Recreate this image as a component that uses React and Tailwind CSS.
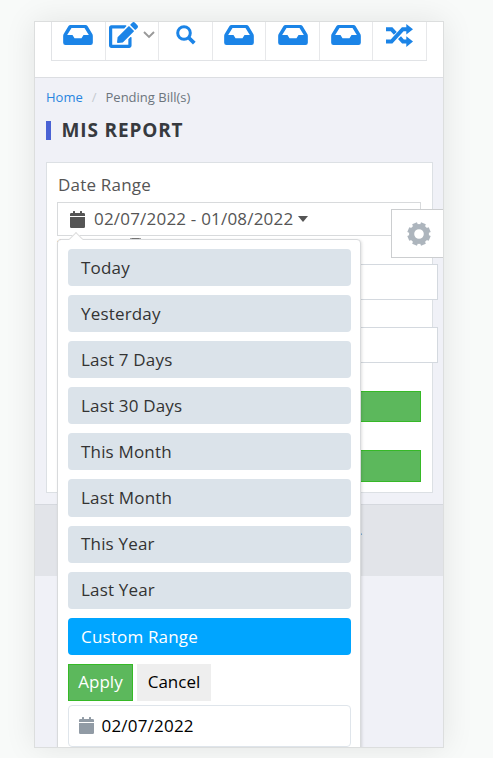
import React from "react";
import { FaEdit } from "react-icons/fa";

const ranges = [
  "Today",
  "Yesterday",
  "Last 7 Days",
  "Last 30 Days",
  "This Month",
  "Last Month",
  "This Year",
  "Last Year",
  "Custom Range",
];

function Calendar({ className }) {
  return (
    <svg className={className} viewBox="0 0 15 17" fill="currentColor">
      <path d="M1.3 2H3V.5Q3 0 3.500 0h1Q5 0 5 .5V2h5V.5q0-.5.5-.5h1q.5 0 .5.5V2h1.700Q15 2 15 3.300V5H0V3.300Q0 2 1.300 2ZM0 6h15v9.700Q15 17 13.700 17H1.300Q0 17 0 15.700Z" />
    </svg>
  );
}

function Inbox() {
  return (
    <svg className="h-[20px] w-[30px]" viewBox="0 0 89 60" fill="currentColor" fillRule="evenodd">
      <path d="M22 0H67Q71 0 73 3L87 26Q89 29 89 33V53Q89 60 82 60H7Q0 60 0 53V33Q0 29 2 26L16 3Q18 0 22 0ZM25 9L12 30H28L34 40H55L61 30H77L64 9Z" />
    </svg>
  );
}

function Search() {
  return (
    <svg className="ml-[1px] h-[20px] w-[20px]" viewBox="0 0 20 20" fill="none" stroke="currentColor">
      <circle cx="8" cy="8" r="6.300" strokeWidth="3" />
      <path d="M12.500 12.500L18.300 18.200" strokeWidth="3.800" />
    </svg>
  );
}

function Shuffle() {
  return (
    <svg className="h-[23px] w-[27px]" viewBox="0 0 27 23" fill="none" stroke="currentColor" strokeWidth="4">
      <path d="M0 17.500H5.500L16.800 5.200H21M0 5.200H5.500L9.300 9.300M13.500 13.600L17 17.500H21" />
      <path d="M20.300 0L27 5.200L20.300 10.500ZM20.300 12.300L27 17.500L20.300 23Z" fill="currentColor" stroke="none" />
    </svg>
  );
}

function Gear() {
  return (
    <svg className="h-[24px] w-[24px] text-[#adb5bd]" viewBox="-12 -12 24 24" fill="none" stroke="currentColor">
      <circle r="7.400" strokeWidth="5.200" />
      <path d="M0-8.500V-11.600M0 8.500V11.600M-8.500 0H-11.600M8.500 0H11.600" strokeWidth="5.200" transform="rotate(22.500)" />
      <path d="M0-8.500V-11.600M0 8.500V11.600M-8.500 0H-11.600M8.500 0H11.600" strokeWidth="5.200" transform="rotate(67.500)" />
    </svg>
  );
}

function Toolbar() {
  const cells = [
    <Inbox />,
    <>
      <FaEdit className="ml-[1px] mr-[5px] h-[26px] w-[29px]" />
      <svg className="h-[8px] w-[12px] text-[#999]" viewBox="0 0 12 8" fill="none" stroke="currentColor" strokeWidth="1.900">
        <path d="M1 1l5 5 5-5" />
      </svg>
    </>,
    <Search />,
    <Inbox />,
    <Inbox />,
    <Inbox />,
    <Shuffle />,
  ];
  return (
    <header className="h-[56px] shrink-0 border-b border-[#dcdee2] bg-white pl-4">
      <div className="flex h-[39px] w-[376px] border-b border-l border-[#e1e3e6]">
        {cells.map((c, i) => (
          <div key={i} className="flex flex-1 items-center justify-center border-r-[1.5px] border-[#e7e8ea] pb-[12px] text-[#1b84e7]">
            {c}
          </div>
        ))}
      </div>
    </header>
  );
}

function DateMenu() {
  return (
    <div className="absolute left-[22px] top-[217px] w-[304px] rounded-[4px] border border-[#d8dadc] bg-white px-[10px] pt-[9px] text-[17px] text-[#333] shadow-[1px_1px_3px_rgba(0,0,0,0.12)]">
      <div className="absolute -top-[6px] left-[13px] h-[10px] w-[10px] rotate-45 border-l border-t border-[#dedede] bg-white" />
      <ul>
        {ranges.map((label, i) => (
          <li
            key={label}
            className={
              "mb-[9px] flex h-[37.1px] w-[283px] items-center rounded-[4px] pl-[13px] tracking-[0.18px] " +
              (i === 8 ? "bg-[#00a5ff] text-white" : "bg-[#dbe3ea]")
            }
          >
            {label}
          </li>
        ))}
      </ul>
      <div className="flex gap-[4px]">
        <button className="h-[37px] w-[65px] border border-[#36b927] bg-[#5cb85c] pb-[2px] text-white">Apply</button>
        <button className="h-[37px] w-[74px] bg-[#eeeeee] pb-[2px] text-black">Cancel</button>
      </div>
      <div className="mt-[4px] flex h-[42px] w-[283px] items-center rounded-[4px] border border-[#dfe5eb] pl-[9.5px] tracking-[0.2px] text-black">
        <Calendar className="mr-[8px] h-[17px] w-[15px] text-[#919ba5]" />
        02/07/2022
      </div>
      <div className="h-[12px]" />
    </div>
  );
}

export default function App() {
  return (
    <div className="h-[758px] w-[493px] overflow-hidden bg-[#f8faf9] pl-[34px] pt-[21px] font-['Open_Sans',sans-serif]">
      <div className="relative flex h-[727px] w-[410px] flex-col overflow-hidden border border-[#dcdede] bg-[#f0f1f7] shadow-[0_0_30px_rgba(0,0,0,0.09)]">
        <Toolbar />
        <nav className="ml-[11px] mt-[11px] flex h-[18px] items-center text-[13px]">
          <span className="text-[#2785e0]">Home</span>
          <span className="mx-[9px] text-[#c5cad0]">/</span>
          <span className="text-[#6c757d]">Pending Bill(s)</span>
        </nav>
        <h1 className="ml-[11px] mt-[14px] flex h-[19px] items-center border-l-[5px] border-[#4a62d4] pl-[10.5px] text-[19px] font-bold tracking-[0.85px] text-[#373a3f]">
          MIS REPORT
        </h1>
        <section className="ml-[11px] mt-[22px] flex h-[331px] w-[387px] shrink-0 flex-col border border-[#dce0e4] bg-white pl-[10px] pt-[9px]">
          <label className="h-[30px] pl-[1px] text-[17px] leading-[26px] tracking-[0.2px] text-[#555]">Date Range</label>
          <div className="flex h-[34px] w-[364px] shrink-0 items-center border-[1.5px] border-[#d8dadc] pl-[12px] text-[17px] tracking-[0.2px] text-[#555]">
            <Calendar className="mr-[9px] h-[17px] w-[15px]" />
            02/07/2022 - 01/08/2022
            <svg className="ml-[5px] h-[6px] w-[10px]" viewBox="0 0 10 6" fill="currentColor">
              <path d="M0 0H10L5 6Z" />
            </svg>
          </div>
          <div className="flex h-[28px] shrink-0 items-start pt-[2px] text-[13px] leading-[14px] text-[#666]">
            <span className="-mt-[1px] w-[34px] text-[#ba5145]">*</span>
            <span className="-mt-[1px] w-[38px]">l &nbsp; l</span>
            <input type="checkbox" readOnly className="h-[13px] w-[13px]" />
            <span className="-mt-[1px] ml-[18px]">ll</span>
          </div>
          <div className="h-[36px] w-[381px] shrink-0 border border-[#d4d9df] bg-white" />
          <div className="mt-[27px] h-[36px] w-[381px] shrink-0 border border-[#d4d9df] bg-white" />
          <div className="mt-[28px] h-[31px] w-[364px] shrink-0 border border-[#36b927] bg-[#5cb85c]" />
          <div className="mt-[28px] h-[32px] w-[364px] shrink-0 border border-[#36b927] bg-[#5cb85c]" />
        </section>
        <footer className="mt-[11px] h-[72px] shrink-0 border-t border-[#d5d8de] bg-[#e2e4e9] pl-[324px] pt-[16px] text-[13px] leading-[18px] text-[#555]">.</footer>
        <DateMenu />
        <button className="absolute left-[356px] top-[187px] flex h-[49px] w-[53px] items-center border border-[#ccced0] bg-white pl-[15px]">
          <Gear />
        </button>
      </div>
    </div>
  );
}
